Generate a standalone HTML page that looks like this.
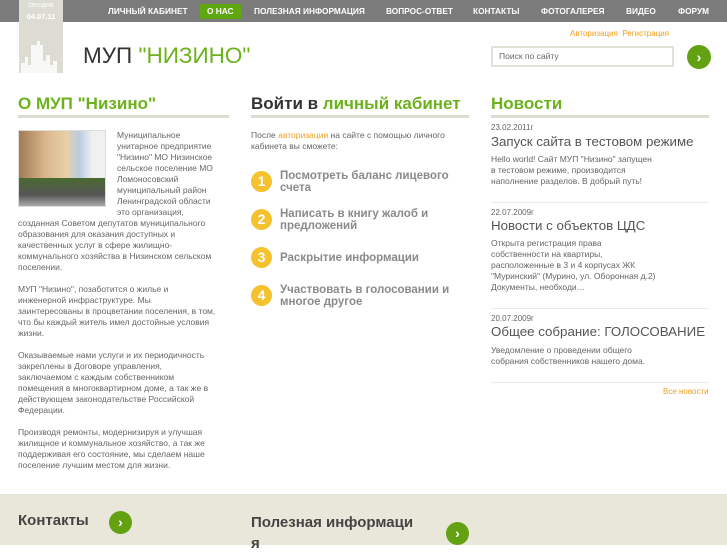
<!DOCTYPE html>
<html><head><meta charset="utf-8"><style>
*{margin:0;padding:0;box-sizing:border-box}
body{width:727px;height:545px;overflow:hidden;background:#fff;font-family:"Liberation Sans","DejaVu Sans",sans-serif;position:relative;color:#555}
.a{position:absolute}
#nav{left:0;top:0;width:727px;height:22px;background:#7b7b7b}
.n{position:absolute;top:0;height:22px;line-height:22px;color:#fff;font-size:8.3px;font-weight:bold;white-space:nowrap}
#tab{left:19px;top:0;width:44px;height:73px;background:#dddcd3}
.h{font-size:17px;font-weight:bold;white-space:nowrap}
.ul{height:3px;background:#dcdcd0}
.t{font-size:8.5px;line-height:11px;color:#666;white-space:nowrap}
.num{width:21px;height:21px;border-radius:50%;background:#f5c12d;color:#fff;font-weight:bold;font-size:14px;text-align:center;line-height:21px}
.it{font-size:11.5px;font-weight:bold;color:#8a8a8a;line-height:12px;white-space:nowrap}
.d{font-size:8px;color:#666}
.nt{font-size:13.3px;color:#555;white-space:nowrap}
.sep{height:1px;background:#e8ebee}
.go{border-radius:50%;background:#62a111;color:#fff;text-align:center;font-weight:bold}
a{color:#f0a020}
</style></head><body>
<div id="nav" class="a"></div>
<div id="tab" class="a">
<div style="color:#fff;font-size:7px;text-align:center;margin-top:2px">сегодня</div>
<div style="color:#fff;font-size:7.5px;font-weight:bold;text-align:center;margin-top:3px">04.07.11</div>
<svg width="44" height="40" style="position:absolute;left:0;top:33px"><path d="M2 40V30h4v-6h3v8h3V12h6v-4h3v4h3v16h3v-6h4v10h3v-4h4v12z" fill="#fff" opacity=".8"/></svg>
</div>
<div class="n" style="left:108px">ЛИЧНЫЙ КАБИНЕТ</div>
<div class="n" style="left:200px;top:4px;height:15px;line-height:15px;background:#5ea70f;padding:0 7px">О НАС</div>
<div class="n" style="left:254px">ПОЛЕЗНАЯ ИНФОРМАЦИЯ</div>
<div class="n" style="left:386px">ВОПРОС-ОТВЕТ</div>
<div class="n" style="left:473px">КОНТАКТЫ</div>
<div class="n" style="left:541px">ФОТОГАЛЕРЕЯ</div>
<div class="n" style="left:626px">ВИДЕО</div>
<div class="n" style="left:678px">ФОРУМ</div>

<div class="a" style="left:83px;top:43px;font-size:22.5px;color:#333;white-space:nowrap">МУП <span style="color:#6cb21c">"НИЗИНО"</span></div>
<div class="a" style="left:570px;top:29px;font-size:8px"><a>Авторизация</a> &nbsp;<a>Регистрация</a></div>
<div class="a" style="left:491px;top:46px;width:183px;height:21px;border:2px solid #e3e2d8;font-size:8.5px;color:#666;line-height:17px;padding-left:6px">Поиск по сайту</div>
<div class="a go" style="left:687px;top:45px;width:24px;height:24px;line-height:24px;font-size:14px">›</div>

<div class="a h" style="left:18px;top:94px;color:#6cb21c">О МУП "Низино"</div>
<div class="a ul" style="left:18px;top:115px;width:211px"></div>
<div class="a" style="left:18px;top:130px;width:88px;height:77px;background:linear-gradient(90deg,#a07a55 0,#d9b58a 30%,#e8d0a8 55%,#b8cce0 70%,#f0f0f0 85%);border:1px solid #ddd"><div style="position:absolute;left:0;bottom:0;width:100%;height:28px;background:linear-gradient(#4a6a30,#555 60%,#aaa)"></div></div>
<div class="a t" style="left:117px;top:130px">Муниципальное<br>унитарное предприятие<br>"Низино" МО Низинское<br>сельское поселение МО<br>Ломоносовский<br>муниципальный район<br>Ленинградской области<br>это организация,</div>
<div class="a t" style="left:18px;top:218px">созданная Советом депутатов муниципального<br>образования для оказания доступных и<br>качественных услуг в сфере жилищно-<br>коммунального хозяйства в Низинском сельском<br>поселении.<br><br>МУП "Низино", позаботится о жилье и<br>инженерной инфраструктуре. Мы<br>заинтересованы в процветании поселения, в том,<br>что бы каждый житель имел достойные условия<br>жизни.<br><br>Оказываемые нами услуги и их периодичность<br>закреплены в Договоре управления,<br>заключаемом с каждым собственником<br>помещения в многоквартирном доме, а так же в<br>действующем законодательстве Российской<br>Федерации.<br><br>Производя ремонты, модернизируя и  улучшая<br>жилищное и коммунальное хозяйство, а так же<br>поддерживая его состояние, мы сделаем наше<br>поселение лучшим местом для жизни.</div>

<div class="a h" style="left:251px;top:94px;color:#333">Войти в <span style="color:#6cb21c">личный кабинет</span></div>
<div class="a ul" style="left:251px;top:115px;width:218px"></div>
<div class="a t" style="left:251px;top:130px">После <a>авторизации</a> на сайте с помощью личного<br>кабинета вы сможете:</div>
<div class="a num" style="left:251px;top:171px">1</div>
<div class="a it" style="left:280px;top:170px">Посмотреть баланс лицевого<br>счета</div>
<div class="a num" style="left:251px;top:209px">2</div>
<div class="a it" style="left:280px;top:208px">Написать в книгу жалоб и<br>предложений</div>
<div class="a num" style="left:251px;top:247px">3</div>
<div class="a it" style="left:280px;top:252px">Раскрытие информации</div>
<div class="a num" style="left:251px;top:285px">4</div>
<div class="a it" style="left:280px;top:284px">Участвовать в голосовании и<br>многое другое</div>

<div class="a h" style="left:491px;top:94px;color:#6cb21c">Новости</div>
<div class="a ul" style="left:491px;top:115px;width:218px"></div>
<div class="a d" style="left:491px;top:123px">23.02.2011г</div>
<div class="a nt" style="left:491px;top:134px">Запуск сайта в тестовом режиме</div>
<div class="a t" style="left:491px;top:154px">Hello world! Сайт МУП "Низино" запущен<br>в тестовом режиме, производится<br>наполнение разделов. В добрый путь!</div>
<div class="a sep" style="left:491px;top:202px;width:218px"></div>
<div class="a d" style="left:491px;top:208px">22.07.2009г</div>
<div class="a nt" style="left:491px;top:218px">Новости с объектов ЦДС</div>
<div class="a t" style="left:491px;top:238px">Открыта регистрация права<br>собственности на квартиры,<br>расположенные в 3 и 4 корпусах ЖК<br>"Муринский" (Мурино, ул. Оборонная д.2)<br>Документы, необходи…</div>
<div class="a sep" style="left:491px;top:308px;width:218px"></div>
<div class="a d" style="left:491px;top:314px">20.07.2009г</div>
<div class="a nt" style="left:491px;top:324px">Общее собрание: ГОЛОСОВАНИЕ</div>
<div class="a t" style="left:491px;top:345px">Уведомление о проведении общего<br>собрания собственников нашего дома.</div>
<div class="a sep" style="left:491px;top:382px;width:218px"></div>
<div class="a" style="left:663px;top:387px;font-size:8px"><a>Все новости</a></div>

<div class="a" style="left:0;top:494px;width:727px;height:51px;background:#e9e6da"></div>
<div class="a" style="left:18px;top:512px;font-size:15px;font-weight:bold;color:#444">Контакты</div>
<div class="a go" style="left:109px;top:511px;width:23px;height:23px;line-height:23px;font-size:14px">›</div>
<div class="a" style="left:251px;top:512px;font-size:15px;font-weight:bold;color:#444;line-height:21px">Полезная информаци<br>я</div>
<div class="a go" style="left:446px;top:522px;width:23px;height:23px;line-height:23px;font-size:14px">›</div>
</body></html>
